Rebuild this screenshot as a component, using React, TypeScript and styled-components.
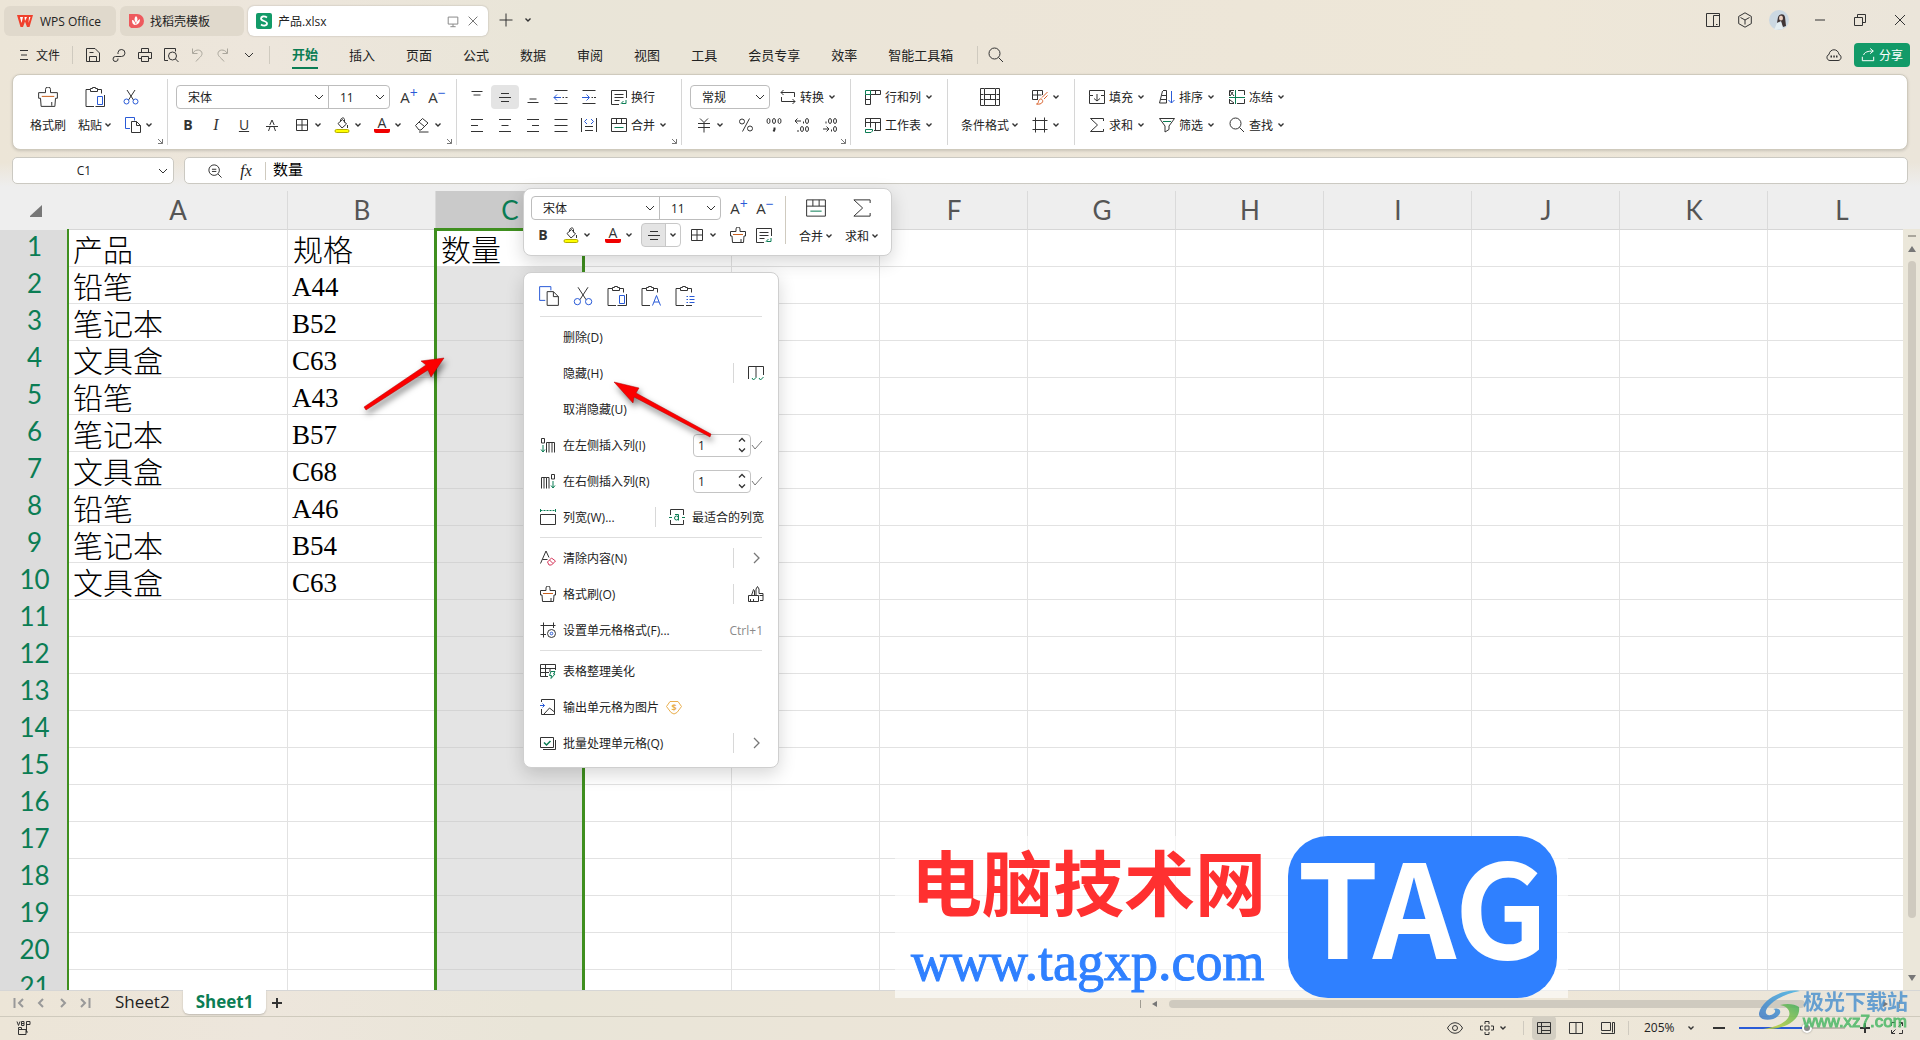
import React from "react";
import styled, { createGlobalStyle, css } from "styled-components";

const ui = `"Open Sans", "Noto Sans CJK SC", sans-serif`;
const ink = "#333333";
const green = "#0b7d54";
const blue = "#2a5bd7";

const Global = createGlobalStyle`
  * { box-sizing: border-box; }
  body { margin: 0; font-family: ${ui}; font-size: 12px; color: #222; overflow: hidden; }
  button, input, select { font: inherit; color: inherit; margin: 0; padding: 0; border: 0; background: transparent; outline: none; }
  button { cursor: pointer; }
  svg { display: block; flex: none; }
  ul { list-style: none; margin: 0; padding: 0; }
`;

/* ---------- icons ---------- */

const icons: Record<string, React.ReactNode> = {
  burger: <path d="M0 3.500h8M1 8h6M0 12.500h8" />,
  save: <path d="M1.500 1.500h8.500l4.500 4.500v8.500h-13zM4.500 14.500v-5h7v5M4.500 5.500h4" />,
  link: <path d="M7 11.500a2.500 2.500 0 1 1-2.500-2H10.500a3.500 3.500 0 1 0-3.500-4v1.500" />,
  print: <path d="M4.500 5.500v-4h7v4M4.500 11.500h-3v-6h13v6h-3M4.500 9.500h7v5h-7z" />,
  preview: (<><path d="M5 13.500H1.500v-12h11v3" /><circle cx="9.500" cy="9" r="4" /><path d="M12.500 12l3 3" /></>),
  undo: <path stroke="#aaa69c" d="M3.500 1.500v5h5M4 6c2.500-4.500 9-3.500 9 .5 0 3-3 4-6 8" />,
  redo: <path stroke="#aaa69c" d="M12.500 1.500v5h-5M12 6C9.500 1.500 3 2.500 3 6.500c0 3 3 4 6 8" />,
  chev: <path d="M4 6l4 4 4-4" />,
  search: (<><circle cx="6.500" cy="6.500" r="5.500" /><path d="M10.500 10.500l4.500 4.500" /></>),
  plus: <path d="M8 1.500v13M1.500 8h13" />,
  monitor: <path stroke="#8a8a8a" d="M2.500 3.500h11v8h-11zM8 11.500v3M5 14.500h6" />,
  x: <path d="M3 3l10 10M13 3L3 13" />,
  xGrey: <path stroke="#777" d="M3 3l10 10M13 3L3 13" />,
  panes: <path d="M1.500 1.500h13v13h-13zM8.500 14.500v-11h6M11 12.500h1.500" />,
  cube: <path d="M8 .8l6.300 3.600v7.200L8 15.200l-6.300-3.600V4.400zM3.500 5.500L8 8l4.500-2.500M8 8v4.500" />,
  min: <path d="M3 8h10" />,
  restore: <path d="M2.500 5.500h8v8h-8zM5.500 5.500v-3h8v8h-3" />,
  cloud: (<><path d="M4 13.500C.5 13.500-.2 8.500 3 7.500c.8-6.300 9.200-6.300 10 0 3.200 1 2.500 6-1 6z" /><path strokeWidth="2" d="M4.500 9.500h1.500M7.300 9.500h1.500M10 9.500h1.500" /></>),
  share: <path stroke="#fff" d="M1.500 10v4.500h13V10M3 8c1-3.500 5-4.500 11-4.500M10.500.5l3.500 3-3.500 3" />,
  brush: (<><path d="M6 4.500V2a2 2 0 0 1 4 0v2.500h5.500V9H14l-.5 6.500h-11L2 9H.5V4.500zM11 15v-3" /><path stroke="#c8601e" d="M3 7.500h10" /></>),
  paste: (<><path d="M5.500 2.500h-4.500v17h8M12.500 2.500h4v4M5.500 2.500v-1h2v-1h3v1h2v3h-7z" /><path stroke={blue} d="M12.500 9.500h5v8h-5z" /><path d="M19.500 8v11.500h-9" /></>),
  pasteA: (<><path d="M5.500 2.500h-4.500v17h8M12.500 2.500h4v4M5.500 2.500v-1h2v-1h3v1h2v3h-7z" /><path stroke={blue} d="M11.500 19.500l4-10 4 10M13 16h5" /></>),
  pasteL: (<><path d="M5.500 2.500h-4.500v17h8M12.500 2.500h4v4M5.500 2.500v-1h2v-1h3v1h2v3h-7z" /><path stroke={blue} d="M11.500 10.500h1.500M14.500 10.500h5M11.500 13.500h1.500M14.500 13.500h5M11.500 16.500h1.500M14.500 16.500h5" /><path d="M11 19.500h6" /></>),
  cut: (<><path d="M4 1l6.500 10M12 1L5.500 11" /><g stroke={blue}><circle cx="3.500" cy="12.500" r="2.500" /><circle cx="12.500" cy="12.500" r="2.500" /></g></>),
  copy: (<><path stroke={blue} d="M5 11.500H.5v-11h9v3" /><path d="M6.500 4.500h5l4 4v7h-9zM11.500 4.500v4h4" /></>),
  grid: <path d="M2.500 2.500h11v11h-11zM8 2.500v11M2.500 8h11" />,
  fill: (<><path d="M4 6.500l4.500-4 4 4.500-4.500 4zM6.500 4.500C6 1 10-.5 10.500 2.500v3M13.500 8v3" /><rect x="1" y="12.500" width="14" height="3" rx="1.500" fill="#ffff00" stroke="#b5ad00" /></>),
  eraser: <path d="M1.500 8.500l7-7 5.500 4.500-7 7H5zM5 5l5.500 4.500M5 15h9.500" />,
  strike: <path d="M2 9.500h12M4.500 14L6 10M8 3l-2.200 5M8 3l2.200 5M11.500 14L10 10" />,
  top: <path d="M2.500 2.500h11M4.500 6h7" />,
  middle: <path d="M4 4.500h8M2 8.500h12M4 12.500h8" />,
  bottom: <path d="M4.500 10h7M2.500 13.500h11" />,
  left: <path d="M2 2.500h12M2 8.500h7M2 14.500h12" />,
  center: <path d="M2 2.500h12M4.500 8.500h7M2 14.500h12" />,
  right: <path d="M2 2.500h12M7 8.500h7M2 14.500h12" />,
  justify: <path d="M1.500 2.500h13M1.500 8.500h13M1.500 14.500h13" />,
  outdent: (<><path d="M1.500 1.500h13M9.500 8.500h1.500M12.500 8.500h2M1.500 14.500h13" /><path stroke={blue} d="M1 8.500h7M4 5.500l-3 3 3 3" /></>),
  indent: (<><path d="M1.500 1.500h13M10.500 8.500h1.500M13 8.500h2M1.500 14.500h13" /><path stroke={blue} d="M1 8.500h7M5.500 5.500l3 3-3 3" /></>),
  distribute: (<><path d="M.5 1v14M15.500 1v14M4 9.500h8M4 13.500h8" /><path stroke={blue} d="M6 2L3.500 4.500 6 7M10 2l2.500 2.500L10 7" /></>),
  wrap: (<><path d="M15.500 9V1.500H.5v14H8M3.500 5.500h9M3.500 8.500h9M3.500 11.500h5" /><path stroke={green} d="M15 11v3.500h-4.500M12.500 12l-2.500 2.500" /></>),
  merge: (<><path d="M.5 1.500h15v13H.5zM.5 6.500h15M5.500 1.500v5M10.500 1.500v5" /><path stroke={green} d="M3.500 10.500h9" /></>),
  convert: <path d="M3.500 1L1 3.500 3.500 6M1 3.500h13.500V8M12.500 10l2.500 2.500-2.500 2.500M15 12.500H1.500V8" />,
  yen: <path d="M4 1.500l4 4 4-4M2 6.500h12M2 10.500h12M8 5.500v10" />,
  percent: (<><circle cx="4" cy="4.500" r="2.500" /><circle cx="12" cy="11.500" r="2.500" /><path d="M11.500 1.500l-7 13" /></>),
  thousands: (<><ellipse cx="2.500" cy="4" rx="1.500" ry="2.500" /><ellipse cx="8" cy="4" rx="1.500" ry="2.500" /><ellipse cx="13.500" cy="4" rx="1.500" ry="2.500" /><path strokeWidth="2" d="M8.500 10.500v2l-1 2" /></>),
  decUp: (<><path d="M1 4h6M3.500 1.500L1 4l2.500 2.500" /><ellipse cx="13" cy="4" rx="1.500" ry="2.500" /><ellipse cx="8" cy="12" rx="1.500" ry="2.500" /><ellipse cx="13" cy="12" rx="1.500" ry="2.500" /><path strokeWidth="2" d="M9 5.500h1M3.500 14h1" /></>),
  decDown: (<><path d="M1 12h6M4.500 9.500L7 12l-2.500 2.500" /><ellipse cx="13" cy="4" rx="1.500" ry="2.500" /><ellipse cx="8" cy="4" rx="1.500" ry="2.500" /><ellipse cx="13" cy="12" rx="1.500" ry="2.500" /><path strokeWidth="2" d="M9 13.500h1M3.500 5.500h1" /></>),
  rowcol: (<><path d="M5.500 1.500h10v4h-10M10.500 1.500v4M.5 5.500v10h5v-10M.5 10.500h5" /><path stroke={green} d="M.5 1.500h5v4h-5z" /></>),
  sheet: (<><path d="M.5 10V1.500h15v12H9M.5 5.500h15M5.500 1.500v9M10.500 5.500v8" /><path stroke={green} d="M.5 12.500h7v1.500l-1.500 1.500H.5z" /></>),
  cond: <path d="M4 1.500H.5v17H4M16 1.500h3.500v17H16M4.500 1.500h11v17h-11zM4.500 7.500h11M4.500 12.500h11M10.500 7.500v5M.5 7.500h3M.5 12.500h3M16.500 7.500h3M16.500 12.500h3" />,
  paint: (<><path d="M10.500 6V1.500H.5v9H6M5.500 1.500v9M.5 6h9" /><path stroke="#d9602a" d="M15.500 3L10 8.500M15.500 6.500L12 10M4.500 15c2 .5 1.500-3 3-4.500 1.500-1.500 4 .5 3 2.500s-3.500 2.500-6 2z" /></>),
  frame: <path d="M3.500.5v15M12.500.5v15M.5 3.500h15M.5 12.500h15" />,
  filldown: <path d="M4 6.500H.5v-5h15v5H12M.5 6.500v8h15v-8M8 5v7M5 9.500L8 12l3-2.500" />,
  sigma: <path d="M14.500 4V1.500h-13L8.500 8l-7 6.500h13V12" />,
  sort: (<><path d="M4 1.500h3.500V14H.5L3.500 2M2 10.500h5M3 6.500h4.500" /><path stroke={blue} d="M12.500 2v12M9.500 11l3 3 3-3" /></>),
  filter: (<><path d="M.5 1.500h15L10 9v3.500L6 15V9z" /><path stroke={green} d="M4 4.500h8" /></>),
  freeze: (<><path d="M5 1.500H.5V7M9 1.500h6.500V6M15.500 10v4.500H8M.5 10v4.500H5M1 2l4 5M1 7l3-4M1 11l4 3" /><path stroke={green} d="M6.500 1v14M0 8.500h16" /></>),
  zoomout: (<><circle cx="7" cy="7" r="6" /><path d="M4.500 6h5M4.500 8.500h5M11.500 11.500L15.500 15.500" /></>),
  hide: (<><path d="M.5 14V1.500h15V10M8 1.500V12" /><path stroke={green} d="M4 13l1.500 2L8.500 12M11 13l1.500 2 3-3" /></>),
  insL: (<><path d="M1.500 1.500h3v4.500h-3zM6.500 15.500V5.500H9V15.500M9 5.500h3V15.500M12 5.500h2.500V15.500" /><path stroke={green} d="M3 8v7M1 12.500l2 2.500 2-2.500" /></>),
  insR: (<><path d="M11.500 1.500h3v4.500h-3zM1.500 15.500V4.500H4V15.500M4 4.500h2.500V15.500M6.500 4.500H9V15.500" /><path stroke={green} d="M13 8v7M11 12.500l2 2.500 2-2.500" /></>),
  colw: (<><path d="M.5 5.500h15v10H.5z" /><path stroke={green} strokeDasharray="2 1" d="M.5 1.500h15" /><path stroke={green} d="M.5 0v3M15.500 0v3" /></>),
  fit: (<><path d="M1.500 6V.5h13V6M1.500 11v4.500h13V11" /><path stroke={green} d="M0 8.500h3M13 8.500h3" /><circle cx="7.500" cy="9" r="2" stroke={green} /><path stroke={green} d="M6 5.500h3.500V11.500" /></>),
  clear: (<><path d="M.5 13.500L6 1l3 6.500M2.500 9.500h5" /><path stroke="#d4365a" d="M7.500 12l4-4 4 3-4 4H9zM9.500 10l3.500 3.500" /></>),
  brushes: <path d="M.5 9.500h10v6H.5zM3.500 9.500l2-6 1 1v5M8 9.500V3l1.500-2.500L11 3v4.500h4v7h-3M11.500 9.500h3.500M2.500 13v2M5.500 13v2" />,
  format: (<><path d="M3.500.5v15M13.500.5V6M.5 3.500h15M.5 12.500H6" /><circle cx="11.500" cy="11.500" r="4" /><circle cx="11.500" cy="11.500" r="1.300" stroke={blue} /></>),
  tidy: (<><path d="M15.500 7V1.500H.5v12H8M.5 5.500h15M.5 9.500H9M5.500 1.500v12M10 5.500V9" /><path stroke={green} d="M11 8.500h4l-1.500 2.500H15l-4 4.500.5-3H9.500z" /></>),
  toimg: (<><path d="M1.500 3V.5h13v15h-13V10M4 15l5.500-6 5 4" /><path stroke={blue} d="M0 6.500h4.500M2.500 4.500l2 2-2 2" /></>),
  batch: (<><path d="M.5 2.500h13v10H.5zM15.500 5v9.500H3" /><path stroke={green} strokeWidth="1.500" d="M4 7.500l2.500 2.500 4-4" /></>),
  next: <path stroke="#777" strokeWidth="1.300" d="M6 3l5 5-5 5" />,
  check: <path stroke="#777" d="M1 6l3 4 7-8" />,
  coin: (<><path stroke="#e9ae4e" d="M4 2.500h8l3.500 5-4.500 6L8 15l-3-1.500-4.500-6z" /><text x="8" y="11.500" textAnchor="middle" fontSize="9" fontWeight="700" fill="#e9ae4e" stroke="none">$</text></>),
  eye: (<><path d="M.5 8c3.500-7 11.500-7 15 0-3.500 7-11.500 7-15 0z" /><circle cx="8" cy="8" r="2.500" /></>),
  cross: <path d="M6 6h4v4H6zM6 4V1.500h4V4M6 12v2.500h4V12M4 6H1.500v4H4M12 6h2.500v4H12" />,
  normal: <path d="M1.500 2.500h13v11h-13zM1.500 6.500h13M5.500 2.500v11M5.500 10.500h9" />,
  split: <path d="M1.500 2.500h13v11h-13zM8 2.500v11" />,
  page: <path d="M1.500 2.500h9v8h-9zM12.500 2.500h2v11h-13v-1M12.500 2.500v10" />,
  minus: <path strokeWidth="2" d="M2 8h12" />,
  plusB: <path strokeWidth="2" d="M8 3v10M3 8h10" />,
  expand: <path d="M6 2.500H2.500V6M10 2.500h3.500V6M13.500 10v3.500H10M2.500 10v3.500H6M13 3L9.500 6.500M3 13l3.500-3.500" />,
  first: <path stroke="#999" strokeWidth="2" d="M3.500 3v10M12 4L8 8l4 4" />,
  prev: <path stroke="#999" strokeWidth="2" d="M10 4L6 8l4 4" />,
  nextS: <path stroke="#999" strokeWidth="2" d="M6 4l4 4-4 4" />,
  last: <path stroke="#999" strokeWidth="2" d="M12.500 3v10M4 4l4 4-4 4" />,
  launch: <path stroke="#777" d="M2 2l4.500 4.500M6.500 2v4.500H2" />,
  macro: <path d="M1 1.500l1.500 4L4 1.500M5.500 1.500h2.500v4H5.500zM5.500 3.500H8M10.500 12V1.500h3.500v3h-3.500M2.500 14.500v-5h7.500v5zM2.500 9.500v-2h3v2M10 12h2" />,
};

function Icon({ n, s = 16, v }: { n: string; s?: number; v?: number }) {
  const box = v || s;
  return (
    <svg width={s} height={s} viewBox={`0 0 ${box} ${box}`} fill="none" stroke={ink} strokeWidth={box / s} aria-hidden="true">
      {icons[n]}
    </svg>
  );
}

function Chev() {
  return (
    <svg width="8" height="8" viewBox="0 0 8 8" fill="none" stroke={ink} strokeWidth="1.4" aria-hidden="true">
      <path d="M1.500 2.500L4 5l2.500-2.500" />
    </svg>
  );
}

/* ---------- shell ---------- */

const Window = styled.div`
  position: relative;
  display: flex;
  flex-direction: column;
  height: 100vh;
  overflow: hidden;
  background: linear-gradient(90deg, #ece5d7 0%, #ede6dc 14%, #e9e5d8 28%, #ece5d8 50%, #eee7d8 80%, #ebe5da 100%);
`;

const TitleBar = styled.header`
  display: flex;
  height: 38px;
  padding: 6px 0 2px 4px;
`;

const DocTab = styled.button<{ $w: number; $on?: boolean }>`
  display: flex;
  align-items: center;
  gap: 6px;
  width: ${(p) => p.$w}px;
  height: 30px;
  margin-right: 4px;
  padding: 0 8px;
  border-radius: 6px;
  background: ${(p) => (p.$on ? "#ffffff" : "#e0d9cc")};
  box-shadow: ${(p) => (p.$on ? "0 0 2px rgba(0,0,0,.25)" : "none")};
  span { flex: 1; text-align: left; white-space: nowrap; }
`;

const Spacer = styled.div`
  flex: 1;
`;

const Gap = styled.i`
  flex: none;
  width: 5px;
`;

const IconBtn = styled.button<{ $w?: number; $on?: boolean }>`
  display: flex;
  align-items: center;
  justify-content: center;
  flex: none;
  width: ${(p) => p.$w || 28}px;
  height: 24px;
  border-radius: 4px;
  background: ${(p) => (p.$on ? "#e4e4e4" : "transparent")};
`;

const CaptionArea = styled.div`
  display: flex;
  align-items: center;
  height: 28px;
`;

const Avatar = styled.span`
  margin: 0 11px 0 8px;
`;

const MenuBar = styled.nav`
  display: flex;
  align-items: center;
  height: 36px;
  padding: 0 10px 2px 20px;
`;

const FileBtn = styled.button`
  display: flex;
  align-items: center;
  gap: 8px;
`;

const VLine = styled.i<{ $l?: number; $r?: number; $h?: number; $dark?: boolean }>`
  flex: none;
  width: 1px;
  height: ${(p) => p.$h || 18}px;
  margin: 0 ${(p) => p.$r || 0}px 0 ${(p) => p.$l || 0}px;
  background: ${(p) => (p.$dark ? "#a09c92" : "#cfcabf")};
`;

const Tabs = styled.ul`
  display: flex;
  gap: 31px;
`;

const RibbonTab = styled.button<{ $on?: boolean }>`
  height: 28px;
  font-size: 13px;
  line-height: 24px;
  white-space: nowrap;
  ${(p) => p.$on && css`color: ${green}; font-weight: 700; border-bottom: 2px solid ${green};`}
`;

const ShareBtn = styled.button`
  display: flex;
  align-items: center;
  justify-content: center;
  gap: 4px;
  width: 56px;
  height: 24px;
  margin-left: 8px;
  border-radius: 4px;
  background: #129a68;
  color: #fff;
`;

/* ---------- ribbon ---------- */

const Ribbon = styled.section`
  display: flex;
  height: 76px;
  margin: 0 12px;
  padding: 4px 0;
  border: 1px solid #cfcabd;
  border-radius: 8px;
  background: #fff;
  box-shadow: 0 1px 3px rgba(0, 0, 0, 0.15);
`;

const Group = styled.div<{ $w?: number; $p: number; $last?: boolean }>`
  position: relative;
  display: flex;
  flex: none;
  width: ${(p) => (p.$w ? p.$w + "px" : "auto")};
  padding: 6px 0 0 ${(p) => p.$p}px;
  border-right: ${(p) => (p.$last ? "0" : "1px solid #d6d6d6")};
`;

const Launcher = styled.button`
  position: absolute;
  right: 3px;
  bottom: 0;
  width: 8px;
  height: 8px;
`;

const Stack = styled.div<{ $l?: number }>`
  display: flex;
  flex-direction: column;
  gap: 4px;
  margin-left: ${(p) => p.$l || 0}px;
`;

const Row = styled.div<{ $l?: number }>`
  display: flex;
  align-items: center;
  height: 24px;
  padding-left: ${(p) => p.$l || 0}px;
`;

const DropBtn = styled.button<{ $r?: number }>`
  display: flex;
  align-items: center;
  flex: none;
  width: 40px;
  height: 24px;
  margin-right: ${(p) => p.$r || 0}px;
  > :first-child { width: 16px; margin: 0 4px; }
`;

const LabelBtn = styled.button<{ $r?: number }>`
  display: flex;
  align-items: center;
  flex: none;
  height: 24px;
  margin-right: ${(p) => p.$r || 0}px;
  white-space: nowrap;
  > svg:first-child { margin: 0 4px; }
  span { margin-right: 4px; }
`;

const TallBtn = styled.button<{ $r?: number }>`
  display: flex;
  flex-direction: column;
  align-items: center;
  flex: none;
  align-self: flex-start;
  gap: 4px;
  margin-right: ${(p) => p.$r || 0}px;
  > svg { margin: 2px 0; }
  > span { display: flex; align-items: center; gap: 2px; height: 24px; white-space: nowrap; }
`;

const ComboBox = styled.div<{ $w: number }>`
  display: flex;
  flex: none;
  width: ${(p) => p.$w}px;
  height: 24px;
  border: 1px solid #bdbdbd;
  border-radius: 4px;
  background: #fff;
`;

const PickWrap = styled.label<{ $w?: number; $line?: boolean }>`
  display: grid;
  align-items: center;
  flex: ${(p) => (p.$w ? "none" : "1")};
  width: ${(p) => (p.$w ? p.$w + "px" : "auto")};
  border-left: ${(p) => (p.$line ? "1px solid #bdbdbd" : "0")};
  select { grid-area: 1 / 1; width: 100%; height: 22px; padding-left: 11px; appearance: none; }
  svg { grid-area: 1 / 1; justify-self: end; margin-right: 1px; pointer-events: none; }
`;

const Letter = styled.span<{ $i?: boolean; $u?: boolean; $b?: boolean }>`
  font-size: ${(p) => (p.$i ? 16 : 14)}px;
  line-height: 16px;
  color: ${ink};
  font-weight: ${(p) => (p.$b ? 700 : 400)};
  font-style: ${(p) => (p.$i ? "italic" : "normal")};
  font-family: ${(p) => (p.$i ? `"Liberation Serif", serif` : ui)};
  text-decoration: ${(p) => (p.$u ? "underline" : "none")};
`;

const SizeLetter = styled.span`
  display: flex;
  font-size: 15px;
  line-height: 22px;
  color: ${ink};
  sup { font-size: 14px; line-height: 14px; color: ${blue}; }
`;

const ColorLetter = styled.span`
  display: block;
  height: 16px;
  border-bottom: 4px solid #f00000;
  border-radius: 2px;
  font-size: 14px;
  line-height: 11px;
  text-align: center;
  color: ${ink};
`;

function Drop({ n, label, r, children }: { n?: string; label: string; r?: number; children?: React.ReactNode }) {
  return (
    <DropBtn aria-label={label} $r={r}>
      {n ? <Icon n={n} /> : children}
      <Chev />
    </DropBtn>
  );
}

function Labelled({ n, text, chev = true, r }: { n: string; text: string; chev?: boolean; r?: number }) {
  return (
    <LabelBtn $r={r}>
      <Icon n={n} />
      <span>{text}</span>
      {chev && <Chev />}
    </LabelBtn>
  );
}

function Pick({ value, label, w, line }: { value: string; label: string; w?: number; line?: boolean }) {
  return (
    <PickWrap $w={w} $line={line}>
      <select aria-label={label} defaultValue={value}>
        <option>{value}</option>
      </select>
      <Icon n="chev" />
    </PickWrap>
  );
}

function FontPicker({ w }: { w: number }) {
  return (
    <ComboBox $w={w}>
      <Pick value="宋体" label="字体" />
      <Pick value="11" label="字号" w={61} line />
    </ComboBox>
  );
}

function SizeButtons({ w }: { w: number }) {
  return (
    <>
      <IconBtn $w={w} aria-label="增大字号"><SizeLetter>A<sup>+</sup></SizeLetter></IconBtn>
      <IconBtn $w={w} aria-label="减小字号"><SizeLetter>A<sup>−</sup></SizeLetter></IconBtn>
    </>
  );
}

/* ---------- formula bar ---------- */

const FormulaBar = styled.div`
  display: flex;
  gap: 10px;
  padding: 7px 12px;
  background: linear-gradient(180deg, rgba(238, 238, 238, 0) 30%, #eeeeee 90%);
`;

const NameBox = styled.label`
  display: flex;
  align-items: center;
  width: 162px;
  height: 27px;
  padding-right: 2px;
  border: 1px solid #cbc9c2;
  border-radius: 5px;
  background: #fff;
  input { flex: 1; min-width: 0; text-align: center; }
`;

const FormulaBox = styled.div`
  display: flex;
  align-items: center;
  flex: 1;
  height: 27px;
  padding-left: 17px;
  border: 1px solid #cbc9c2;
  border-radius: 5px;
  background: #fff;
  input { flex: 1; padding-bottom: 4px; font-size: 15px; line-height: 20px; color: #000; }
`;

const Fx = styled.span`
  font: italic 16px "Liberation Serif", serif;
`;

/* ---------- grid ---------- */

const GridArea = styled.main`
  display: flex;
  flex: 1;
  min-height: 0;
  background: #eeeeee;
`;

const SheetView = styled.div`
  position: relative;
  flex: 1;
  min-width: 0;
  overflow: hidden;
`;

const Sheet = styled.table`
  width: 1916px;
  table-layout: fixed;
  border-collapse: separate;
  border-spacing: 0;
  background: #fff;
`;

const headText = css`
  font-family: Lato, sans-serif;
  font-size: 26px;
  font-weight: 400;
  line-height: 30px;
`;

const ColHead = styled.th<{ $on?: boolean }>`
  ${headText}
  height: 39px;
  padding: 0 0 0 1px;
  border-right: 1px solid #dadada;
  border-bottom: 1px solid #d6d6d6;
  background: ${(p) => (p.$on ? "#cacaca" : "#eeeeee")};
  color: ${(p) => (p.$on ? green : "#555555")};
`;

const Corner = styled.th`
  height: 39px;
  padding: 0;
  background: #eeeeee;
  svg { margin: 0 0 0 30px; }
`;

const RowHead = styled.th`
  ${headText}
  height: 37px;
  padding: 0 0 6px 1px;
  background: #dcdcdc;
  color: ${green};
`;

const Cell = styled.td<{ $sel?: boolean; $code?: boolean }>`
  height: 37px;
  padding: ${(p) => (p.$code ? "5px 0 0 4px" : "4px 0 0 5px")};
  border-right: 1px solid ${(p) => (p.$sel ? "#d4d4d4" : "#e2e2e2")};
  border-bottom: 1px solid ${(p) => (p.$sel ? "#d4d4d4" : "#e2e2e2")};
  background: ${(p) => (p.$sel ? "#e4e4e4" : "#ffffff")};
  font-family: "Liberation Serif", "Noto Sans CJK SC", serif;
  font-size: ${(p) => (p.$code ? 27 : 30)}px;
  font-weight: 300;
  line-height: 31px;
  color: #000;
  white-space: nowrap;
`;

const Selection = styled.div`
  position: absolute;
  top: 37px;
  bottom: -4px;
  left: 434px;
  width: 151px;
  border: 3px solid #3f8f1f;
`;

const FreezeEdge = styled.div`
  position: absolute;
  top: 38px;
  bottom: 0;
  left: 67px;
  width: 2px;
  background: #3f8f1f;
`;

const VScroll = styled.div`
  display: flex;
  flex-direction: column;
  align-items: center;
  gap: 8px;
  width: 17px;
  margin-top: 38px;
  padding: 6px 0 8px;
  background: #ebe7da;
`;

const VThumb = styled.div`
  flex: 1;
  width: 8px;
  margin-bottom: 48px;
  border-radius: 4px;
  background: #cfcabf;
`;

const Dash = styled.i`
  width: 8px;
  height: 2px;
  background: #aaa69c;
`;

/* ---------- sheet tabs and status ---------- */

const SheetBar = styled.div`
  display: flex;
  align-items: flex-start;
  height: 26px;
  padding-left: 8px;
  border-top: 1px solid #d6d6d6;
`;

const SheetTab = styled.button<{ $on?: boolean }>`
  height: 24px;
  margin-top: -1px;
  padding: 0 13px;
  border-radius: 0 0 6px 6px;
  font-size: 17px;
  line-height: 24px;
  font-weight: ${(p) => (p.$on ? 700 : 400)};
  color: ${(p) => (p.$on ? green : "#222")};
  background: ${(p) => (p.$on ? "#fff" : "transparent")};
  box-shadow: ${(p) => (p.$on ? "0 1px 2px rgba(0,0,0,.2)" : "none")};
`;

const SheetNav = styled.div`
  display: flex;
  margin-right: 6px;
`;

const HScroll = styled.div`
  display: flex;
  align-items: center;
  gap: 10px;
  width: 41%;
  height: 25px;
  margin-left: auto;
  padding: 0 20px 0 4px;
`;

const HThumb = styled.div`
  flex: 1;
  height: 8px;
  margin-right: 66px;
  border-radius: 4px;
  background: #cfcabf;
`;

const Status = styled.footer`
  display: flex;
  align-items: center;
  gap: 8px;
  height: 24px;
  padding: 0 11px 2px 12px;
  border-top: 1px solid #cfcabd;
`;

const ViewBtn = styled(IconBtn)`
  background: ${(p) => (p.$on ? "#d3cec2" : "transparent")};
`;

const ZoomPick = styled.label`
  display: grid;
  align-items: center;
  width: 55px;
  margin-left: 7px;
  select { grid-area: 1 / 1; appearance: none; font-size: 12px; }
  svg { grid-area: 1 / 1; justify-self: end; margin-right: 4px; pointer-events: none; }
`;

const Slider = styled.input`
  appearance: none;
  width: 106px;
  height: 16px;
  &::-webkit-slider-runnable-track {
    height: 2px;
    background: linear-gradient(90deg, ${blue} 65%, #bdb8ad 65%);
  }
  &::-webkit-slider-thumb {
    appearance: none;
    width: 10px;
    height: 10px;
    margin-top: -4px;
    border: 2px solid #fff;
    border-radius: 50%;
    background: #8a8a8a;
    box-shadow: 0 0 2px rgba(0, 0, 0, 0.4);
  }
`;

/* ---------- floating panels ---------- */

const panel = css`
  position: absolute;
  left: 523px;
  border: 1px solid #cfcfcf;
  border-radius: 8px;
  background: #fff;
  box-shadow: 0 6px 18px rgba(0, 0, 0, 0.16);
`;

const MiniBar = styled.div`
  ${panel}
  top: 188px;
  display: flex;
  width: 369px;
  height: 68px;
  padding: 7px 0 0 7px;
`;

const MiniRows = styled.div`
  display: flex;
  flex-direction: column;
  gap: 3px;
  width: 253px;
`;

const SplitBtn = styled.button`
  display: grid;
  grid-template-columns: 24px 14px;
  place-items: center;
  width: 40px;
  height: 24px;
  margin-right: 4px;
  border: 1px solid #c8c8c8;
  border-radius: 4px;
  background: linear-gradient(90deg, #e4e4e4 23px, #c8c8c8 23px, #c8c8c8 24px, #fff 24px);
`;

const ContextMenu = styled.div`
  ${panel}
  top: 272px;
  width: 256px;
  padding: 5px 1px 6px;
`;

const QuickRow = styled.div`
  display: flex;
  height: 36px;
  padding-left: 7px;
  button { height: 36px; }
`;

const Sep = styled.hr`
  height: 1px;
  margin: 2px 15px;
  border: 0;
  background: #dedede;
`;

const MenuRow = styled.div`
  display: flex;
  align-items: center;
  height: 36px;
`;

const MenuItem = styled.button`
  display: flex;
  align-items: center;
  gap: 7px;
  flex: 1;
  height: 36px;
  padding-left: 15px;
  white-space: nowrap;
`;

const Blank = styled.i`
  width: 16px;
`;

const Side = styled.button<{ $w?: number }>`
  display: flex;
  align-items: center;
  justify-content: center;
  gap: 7px;
  width: ${(p) => p.$w || 44}px;
  height: 20px;
  border-left: 1px solid #d8d8d8;
  white-space: nowrap;
`;

const Shortcut = styled.kbd`
  margin-right: 14px;
  font-family: ${ui};
  color: #8a8a8a;
`;

const Spin = styled.label`
  display: flex;
  align-items: center;
  width: 58px;
  height: 23px;
  padding: 0 3px 0 4px;
  border: 1px solid #c4c4c4;
  border-radius: 4px;
  input { flex: 1; min-width: 0; }
`;

const Apply = styled.button`
  margin-right: 14px;
`;

const Arrows = styled.svg`
  position: absolute;
  left: 340px;
  top: 340px;
  filter: drop-shadow(2px 4px 3px rgba(0, 0, 0, 0.5));
  pointer-events: none;
`;

const Banner = styled.div`
  position: absolute;
  left: 895px;
  top: 836px;
  display: flex;
  width: 673px;
  height: 162px;
  background: rgba(255, 255, 255, 0.6);
`;

const BannerText = styled.div`
  width: 393px;
  padding: 4px 0 0 16px;
  white-space: nowrap;
`;

const BannerTitle = styled.div`
  font: 700 71px/78px "Noto Sans CJK SC", sans-serif;
  color: #ff3030;
`;

const BannerUrl = styled.div`
  font: 400 54px/88px "Liberation Serif", serif;
  color: #2f80ff;
  -webkit-text-stroke: 1px #2f80ff;
`;

const BannerTag = styled.div`
  width: 269px;
  border-radius: 40px;
  background: #2f80ff;
  color: #fff;
  text-align: center;
  font: 700 130px/132px "Noto Sans CJK SC", sans-serif;
`;

const SiteMark = styled.div`
  position: absolute;
  right: 12px;
  top: 988px;
  display: flex;
  gap: 1px;
  opacity: 0.85;
  white-space: nowrap;
`;

const SiteName = styled.div`
  font: 700 21px/24px "Noto Sans CJK SC", sans-serif;
  color: #4f93cf;
`;

const SiteUrl = styled.div`
  font: 400 17px/20px "Liberation Sans", sans-serif;
  color: #4bb866;
  -webkit-text-stroke: 1px #4bb866;
`;

/* ---------- data ---------- */

const ribbonTabs = ["开始", "插入", "页面", "公式", "数据", "审阅", "视图", "工具", "会员专享", "效率", "智能工具箱"];
const columns = ["A", "B", "C", "D", "E", "F", "G", "H", "I", "J", "K", "L"];
const records = [
  ["产品", "规格", "数量"],
  ["铅笔", "A44"], ["笔记本", "B52"], ["文具盒", "C63"],
  ["铅笔", "A43"], ["笔记本", "B57"], ["文具盒", "C68"],
  ["铅笔", "A46"], ["笔记本", "B54"], ["文具盒", "C63"],
];
const rows = Array.from({ length: 21 }, (_, i) => records[i] || []);

function TriMark({ d }: { d: string }) {
  return (
    <svg width="8" height="8" viewBox="0 0 8 8" fill="#777" aria-hidden="true">
      <path d={d} />
    </svg>
  );
}

function InsertRow({ icon, text }: { icon: string; text: string }) {
  return (
    <MenuRow>
      <MenuItem><Icon n={icon} />{text}</MenuItem>
      <Spin>
        <input type="text" aria-label={text + "数量"} defaultValue="1" />
        <svg width="10" height="18" viewBox="0 0 10 18" fill="none" stroke={ink} strokeWidth="1.300" aria-hidden="true">
          <path d="M2 5.500l3-3 3 3M2 12.500l3 3 3-3" />
        </svg>
      </Spin>
      <Apply aria-label="确定"><Icon n="check" s={12} /></Apply>
    </MenuRow>
  );
}

export default function App() {
  return (
    <Window>
      <Global />
      <TitleBar>
        <DocTab $w={112}>
          <svg width="22" height="16" viewBox="-5 0 22 16" aria-hidden="true">
            <path d="M0 2h16l-3.500 12H10L8 8.500 6 14H3.500z" fill="#f0402c" />
            <path d="M3 4h3l-1.500 6zM7.500 4H10l-2 4zM12 4h1.500l-2 6z" fill="#fff" />
          </svg>
          <span>WPS Office</span>
        </DocTab>
        <DocTab $w={124}>
          <svg width="16" height="16" viewBox="0 0 16 16" aria-hidden="true">
            <path d="M1 1h8a7 7 0 0 1 0 14H3l-2-2z" fill="#ee5a5e" />
            <path d="M8 3c2 2 2 4 0 7-2-3-2-5 0-7M4 7c2 0 3 2 4 5-3 0-4-2-4-5M12 6c0 3-1 5-4 6 0-3 2-5 4-6" fill="#fff" />
          </svg>
          <span>找稻壳模板</span>
        </DocTab>
        <DocTab $w={240} $on>
          <svg width="16" height="16" viewBox="0 0 16 16" aria-hidden="true">
            <rect width="16" height="16" rx="2" fill="#129a68" />
            <path d="M11 4.500C8 2.500 5 3.500 5 5.500c0 3 6 2 6 5 0 2.500-4 2.500-6 1" fill="none" stroke="#fff" strokeWidth="1.800" />
          </svg>
          <span>产品.xlsx</span>
          <Icon n="monitor" s={14} v={16} />
          <Icon n="xGrey" s={14} v={16} />
        </DocTab>
        <CaptionArea>
          <IconBtn aria-label="新建标签"><Icon n="plus" /></IconBtn>
          <IconBtn $w={16} aria-label="标签列表"><Chev /></IconBtn>
        </CaptionArea>
        <Spacer />
        <CaptionArea>
          <IconBtn $w={32} aria-label="边栏"><Icon n="panes" /></IconBtn>
          <IconBtn $w={32} aria-label="应用"><Icon n="cube" /></IconBtn>
          <Avatar>
            <svg width="20" height="20" viewBox="0 0 20 20" aria-hidden="true">
              <circle cx="10" cy="10" r="10" fill="#cbd8e2" />
              <path d="M9 7c1-3 6-4 7 0l1 9-3 1-2-6-4 2z" fill="#3f3536" />
              <ellipse cx="12" cy="8" rx="2" ry="2.500" fill="#ecd0c0" />
              <path d="M5 20l3-7 4-1 2 7z" fill="#e4eef2" />
            </svg>
          </Avatar>
          <IconBtn $w={40} aria-label="最小化"><Icon n="min" /></IconBtn>
          <IconBtn $w={40} aria-label="还原"><Icon n="restore" /></IconBtn>
          <IconBtn $w={40} aria-label="关闭"><Icon n="x" /></IconBtn>
        </CaptionArea>
      </TitleBar>

      <MenuBar>
        <FileBtn>
          <svg width="8" height="16" viewBox="0 0 8 16" fill="none" stroke={ink} aria-hidden="true">{icons.burger}</svg>
          文件
        </FileBtn>
        <VLine $l={12} $r={7} />
        {["save", "link", "print", "preview", "undo", "redo", "chev"].map((n) => (
          <IconBtn key={n} $w={26} aria-label={n}><Icon n={n} /></IconBtn>
        ))}
        <VLine $l={7} $r={22} />
        <Tabs>
          {ribbonTabs.map((t, i) => (
            <li key={t}><RibbonTab $on={i === 0}>{t}</RibbonTab></li>
          ))}
        </Tabs>
        <VLine $l={24} $r={4} />
        <IconBtn aria-label="搜索"><Icon n="search" /></IconBtn>
        <Spacer />
        <IconBtn $w={24} aria-label="云"><Icon n="cloud" /></IconBtn>
        <ShareBtn><Icon n="share" s={14} v={16} />分享</ShareBtn>
      </MenuBar>

      <Ribbon>
        <Group $w={155} $p={17}>
          <TallBtn $r={12}><Icon n="brush" s={20} v={16} /><span>格式刷</span></TallBtn>
          <TallBtn $r={9}><Icon n="paste" s={20} /><span>粘贴<Chev /></span></TallBtn>
          <Stack>
            <IconBtn $w={20} aria-label="剪切"><Icon n="cut" /></IconBtn>
            <Drop n="copy" label="复制" />
          </Stack>
          <Launcher aria-label="剪贴板选项"><Icon n="launch" s={8} /></Launcher>
        </Group>
        <Group $w={289} $p={6}>
          <Stack>
            <Row $l={2}>
              <FontPicker w={214} />
              <Gap />
              <SizeButtons w={28} />
            </Row>
            <Row>
              <IconBtn aria-label="加粗"><Letter $b>B</Letter></IconBtn>
              <IconBtn aria-label="倾斜"><Letter $i>I</Letter></IconBtn>
              <IconBtn aria-label="下划线"><Letter $u>U</Letter></IconBtn>
              <IconBtn aria-label="删除线"><Icon n="strike" /></IconBtn>
              <Row $l={4}>
                <Drop n="grid" label="边框" />
                <Drop n="fill" label="填充颜色" />
                <Drop label="字体颜色"><ColorLetter>A</ColorLetter></Drop>
                <Drop n="eraser" label="清除" />
              </Row>
            </Row>
          </Stack>
          <Launcher aria-label="字体选项"><Icon n="launch" s={8} /></Launcher>
        </Group>
        <Group $w={225} $p={6}>
          <Stack>
            <Row>
              <IconBtn aria-label="顶端对齐"><Icon n="top" /></IconBtn>
              <IconBtn $on aria-label="垂直居中"><Icon n="middle" /></IconBtn>
              <IconBtn aria-label="底端对齐"><Icon n="bottom" /></IconBtn>
              <IconBtn aria-label="减少缩进"><Icon n="outdent" /></IconBtn>
              <IconBtn aria-label="增加缩进"><Icon n="indent" /></IconBtn>
            </Row>
            <Row>
              <IconBtn aria-label="左对齐"><Icon n="left" /></IconBtn>
              <IconBtn aria-label="居中"><Icon n="center" /></IconBtn>
              <IconBtn aria-label="右对齐"><Icon n="right" /></IconBtn>
              <IconBtn aria-label="两端对齐"><Icon n="justify" /></IconBtn>
              <IconBtn aria-label="分散对齐"><Icon n="distribute" /></IconBtn>
            </Row>
          </Stack>
          <Stack $l={4}>
            <Labelled n="wrap" text="换行" chev={false} />
            <Labelled n="merge" text="合并" />
          </Stack>
          <Launcher aria-label="对齐选项"><Icon n="launch" s={8} /></Launcher>
        </Group>
        <Group $w={169} $p={8}>
          <Stack>
            <Row>
              <ComboBox $w={80}><Pick value="常规" label="数字格式" /></ComboBox>
              <Row $l={6}><Labelled n="convert" text="转换" /></Row>
            </Row>
            <Row $l={2}>
              <Drop n="yen" label="货币" />
              <IconBtn aria-label="百分比"><Icon n="percent" /></IconBtn>
              <IconBtn aria-label="千位分隔"><Icon n="thousands" /></IconBtn>
              <IconBtn aria-label="增加小数位"><Icon n="decUp" /></IconBtn>
              <IconBtn aria-label="减少小数位"><Icon n="decDown" /></IconBtn>
            </Row>
          </Stack>
          <Launcher aria-label="数字选项"><Icon n="launch" s={8} /></Launcher>
        </Group>
        <Group $w={97} $p={10}>
          <Stack>
            <Labelled n="rowcol" text="行和列" />
            <Labelled n="sheet" text="工作表" />
          </Stack>
        </Group>
        <Group $w={127} $p={13}>
          <TallBtn $r={9}><Icon n="cond" s={20} /><span>条件格式<Chev /></span></TallBtn>
          <Stack>
            <Drop n="paint" label="表格样式" />
            <Drop n="frame" label="单元格样式" />
          </Stack>
        </Group>
        <Group $p={10} $last>
          <Stack>
            <Row>
              <Labelled n="filldown" text="填充" r={10} />
              <Labelled n="sort" text="排序" r={10} />
              <Labelled n="freeze" text="冻结" />
            </Row>
            <Row>
              <Labelled n="sigma" text="求和" r={10} />
              <Labelled n="filter" text="筛选" r={10} />
              <Labelled n="search" text="查找" />
            </Row>
          </Stack>
        </Group>
      </Ribbon>

      <FormulaBar>
        <NameBox>
          <input aria-label="名称框" defaultValue="C1" />
          <Icon n="chev" />
        </NameBox>
        <FormulaBox>
          <IconBtn $w={26} aria-label="缩小"><Icon n="zoomout" s={14} v={16} /></IconBtn>
          <Gap />
          <IconBtn $w={26} aria-label="插入函数"><Fx>fx</Fx></IconBtn>
          <VLine $l={6} $r={7} />
          <input aria-label="编辑栏" defaultValue="数量" />
        </FormulaBox>
      </FormulaBar>

      <GridArea>
        <SheetView>
          <Sheet>
            <colgroup>
              <col style={{ width: 68 }} />
              {columns.map((c) => <col key={c} style={{ width: c === "A" ? 220 : 148 }} />)}
            </colgroup>
            <thead>
              <tr>
                <Corner aria-label="全选">
                  <svg width="12" height="12" viewBox="0 0 12 12" aria-hidden="true"><path d="M12 0v12H0v-1z" fill="#777" /></svg>
                </Corner>
                {columns.map((c) => <ColHead key={c} scope="col" $on={c === "C"}>{c}</ColHead>)}
              </tr>
            </thead>
            <tbody>
              {rows.map((r, i) => (
                <tr key={i}>
                  <RowHead scope="row">{i + 1}</RowHead>
                  {columns.map((c, j) => (
                    <Cell key={c} $sel={c === "C" && i > 0} $code={c === "B" && i > 0}>{r[j]}</Cell>
                  ))}
                </tr>
              ))}
            </tbody>
          </Sheet>
          <FreezeEdge />
          <Selection />
        </SheetView>
        <VScroll>
          <Dash />
          <TriMark d="M4 1l4 6H0z" />
          <VThumb />
          <TriMark d="M4 7l4-6H0z" />
        </VScroll>
      </GridArea>

      <SheetBar>
        <SheetNav>
          <IconBtn $w={22} aria-label="第一个"><Icon n="first" /></IconBtn>
          <IconBtn $w={22} aria-label="上一个"><Icon n="prev" /></IconBtn>
          <IconBtn $w={22} aria-label="下一个"><Icon n="nextS" /></IconBtn>
          <IconBtn $w={22} aria-label="最后一个"><Icon n="last" /></IconBtn>
        </SheetNav>
        <SheetTab>Sheet2</SheetTab>
        <SheetTab $on>Sheet1</SheetTab>
        <IconBtn $w={22} aria-label="新建工作表"><Icon n="plusB" /></IconBtn>
        <HScroll>
          <VLine $h={8} $dark />
          <TriMark d="M1 4l5-3v6z" />
          <HThumb />
          <TriMark d="M7 4L2 1v6z" />
          <VLine $h={8} $dark />
        </HScroll>
      </SheetBar>

      <Status>
        <IconBtn $w={24} aria-label="宏"><Icon n="macro" /></IconBtn>
        <Spacer />
        <IconBtn $w={24} aria-label="护眼"><Icon n="eye" /></IconBtn>
        <Drop n="cross" label="阅读模式" />
        <VLine $h={14} />
        <ViewBtn $w={24} $on aria-label="普通视图"><Icon n="normal" /></ViewBtn>
        <ViewBtn $w={24} aria-label="分页预览"><Icon n="split" /></ViewBtn>
        <ViewBtn $w={24} aria-label="页面布局"><Icon n="page" /></ViewBtn>
        <VLine $h={14} />
        <ZoomPick>
          <select aria-label="缩放比例" defaultValue="205%"><option>205%</option></select>
          <Chev />
        </ZoomPick>
        <IconBtn $w={24} aria-label="缩小显示"><Icon n="minus" /></IconBtn>
        <Slider type="range" min="0" max="100" defaultValue="66" aria-label="缩放" />
        <IconBtn $w={24} aria-label="放大显示"><Icon n="plusB" /></IconBtn>
        <IconBtn $w={24} aria-label="全屏"><Icon n="expand" /></IconBtn>
      </Status>

      <MiniBar>
        <MiniRows>
          <Row>
            <FontPicker w={190} />
            <Gap />
            <SizeButtons w={26} />
          </Row>
          <Row>
            <IconBtn $w={24} aria-label="加粗"><Letter $b>B</Letter></IconBtn>
            <Row $l={4}>
              <Drop n="fill" label="填充颜色" r={2} />
              <Drop label="字体颜色"><ColorLetter>A</ColorLetter></Drop>
              <SplitBtn aria-label="对齐方式"><Icon n="middle" /><Chev /></SplitBtn>
              <Drop n="grid" label="边框" />
              <IconBtn $w={26} aria-label="格式刷"><Icon n="brush" /></IconBtn>
              <IconBtn $w={26} aria-label="换行"><Icon n="wrap" /></IconBtn>
            </Row>
          </Row>
        </MiniRows>
        <VLine $h={48} $l={1} $r={13} />
        <TallBtn $r={12}><Icon n="merge" s={20} v={16} /><span>合并<Chev /></span></TallBtn>
        <TallBtn><Icon n="sigma" s={20} v={16} /><span>求和<Chev /></span></TallBtn>
      </MiniBar>

      <ContextMenu>
        <QuickRow>
          <IconBtn $w={34} aria-label="复制"><Icon n="copy" s={20} v={16} /></IconBtn>
          <IconBtn $w={34} aria-label="剪切"><Icon n="cut" s={20} v={16} /></IconBtn>
          <IconBtn $w={34} aria-label="粘贴"><Icon n="paste" s={20} /></IconBtn>
          <IconBtn $w={34} aria-label="粘贴为值"><Icon n="pasteA" s={20} /></IconBtn>
          <IconBtn $w={34} aria-label="选择性粘贴"><Icon n="pasteL" s={20} /></IconBtn>
        </QuickRow>
        <Sep />
        <MenuRow><MenuItem><Blank />删除(D)</MenuItem></MenuRow>
        <MenuRow>
          <MenuItem><Blank />隐藏(H)</MenuItem>
          <Side aria-label="取消隐藏列"><Icon n="hide" /></Side>
        </MenuRow>
        <MenuRow><MenuItem><Blank />取消隐藏(U)</MenuItem></MenuRow>
        <InsertRow icon="insL" text="在左侧插入列(I)" />
        <InsertRow icon="insR" text="在右侧插入列(R)" />
        <MenuRow>
          <MenuItem><Icon n="colw" />列宽(W)...</MenuItem>
          <Side $w={122}><Icon n="fit" />最适合的列宽</Side>
        </MenuRow>
        <Sep />
        <MenuRow>
          <MenuItem><Icon n="clear" />清除内容(N)</MenuItem>
          <Side aria-label="更多清除"><Icon n="next" /></Side>
        </MenuRow>
        <MenuRow>
          <MenuItem><Icon n="brush" />格式刷(O)</MenuItem>
          <Side aria-label="连续格式刷"><Icon n="brushes" /></Side>
        </MenuRow>
        <MenuRow>
          <MenuItem><Icon n="format" />设置单元格格式(F)...</MenuItem>
          <Shortcut>Ctrl+1</Shortcut>
        </MenuRow>
        <Sep />
        <MenuRow><MenuItem><Icon n="tidy" />表格整理美化</MenuItem></MenuRow>
        <MenuRow><MenuItem><Icon n="toimg" />输出单元格为图片<Icon n="coin" /></MenuItem></MenuRow>
        <MenuRow>
          <MenuItem><Icon n="batch" />批量处理单元格(Q)</MenuItem>
          <Side aria-label="更多批量处理"><Icon n="next" /></Side>
        </MenuRow>
      </ContextMenu>

      <Arrows width="390" height="110" viewBox="340 340 390 110" aria-hidden="true">
        <g stroke="#b00000" fill="#fb0000" strokeWidth="0.500">
          <path d="M364 407l62-42-5-4 23-3-13 19-3-7-62 40z" />
          <path d="M614 382l25 6-3 5 75 41-1 3-76-40-1 6z" />
        </g>
      </Arrows>

      <Banner>
        <BannerText>
          <BannerTitle>电脑技术网</BannerTitle>
          <BannerUrl>www.tagxp.com</BannerUrl>
        </BannerText>
        <BannerTag>TAG</BannerTag>
      </Banner>

      <SiteMark>
        <svg width="44" height="42" viewBox="0 0 44 42" aria-hidden="true">
          <defs>
            <linearGradient id="sky" x1="0" y1="1" x2="1" y2="0"><stop offset="0" stopColor="#3f78c4" /><stop offset="1" stopColor="#45b4e6" /></linearGradient>
            <linearGradient id="leaf" x1="0" y1="1" x2="1" y2="0"><stop offset="0" stopColor="#d6d838" /><stop offset="1" stopColor="#3fae5c" /></linearGradient>
          </defs>
          <path d="M42 3C24 0 4 12 1 25c-1 8 13 9 19 3 5-5 1-9-5-7 4 1 2 5-2 6-6 1-7-4-2-9C17 11 29 5 42 3z" fill="url(#sky)" />
          <path d="M22 17c7-2 15-1 19 2 2 12-12 23-36 22 14-2 24-7 26-13 2-6-3-10-9-11z" fill="url(#leaf)" />
        </svg>
        <div>
          <SiteName>极光下载站</SiteName>
          <SiteUrl>www.xz7.com</SiteUrl>
        </div>
      </SiteMark>
    </Window>
  );
}
